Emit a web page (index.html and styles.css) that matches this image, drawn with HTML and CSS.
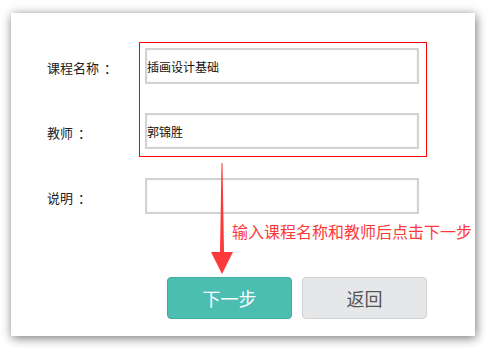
FILE: index.html
```html
<!DOCTYPE html>
<html lang="zh-CN">
<head>
    <meta charset="UTF-8">
    <meta name="viewport" content="width=device-width, initial-scale=1.0">
    <title>新建课程</title>
    <link rel="stylesheet" href="styles.css">
</head>
<body>
    <div class="page">
        <div class="card">
            <form class="course-form">
                <div class="form-row">
                    <label class="form-label">课程名称<span class="colon">：</span></label>
                    <input class="form-input" type="text" value="插画设计基础">
                </div>
                <div class="form-row">
                    <label class="form-label">教师<span class="colon">：</span></label>
                    <input class="form-input" type="text" value="郭锦胜">
                </div>
                <div class="form-row">
                    <label class="form-label">说明<span class="colon">：</span></label>
                    <input class="form-input" type="text" value="">
                </div>
                <div class="form-actions">
                    <button type="button" class="btn btn-next">下一步</button>
                    <button type="button" class="btn btn-back">返回</button>
                </div>
            </form>

            <div class="highlight-box"></div>
            <svg class="hint-arrow" width="22" height="112" viewBox="0 0 22 112">
                <polygon points="10.5,0 11.5,0 13,89 22,89 11,111 0,89 9,89" fill="#fd3a3a"/>
            </svg>
            <div class="hint-text">输入课程名称和教师后点击下一步</div>
        </div>
    </div>
</body>
</html>
```

FILE: styles.css
```css
* {
    margin: 0;
    padding: 0;
    box-sizing: border-box;
}

body {
    font-family: "Noto Sans CJK SC", "Noto Sans", sans-serif;
    background: #ffffff;
    width: 487px;
    height: 348px;
    overflow: hidden;
}

.page {
    padding: 13px 12px 12px 11px;
}

.card {
    position: relative;
    width: 464px;
    height: 323px;
    background: #ffffff;
    box-shadow: 1px 2px 10px rgba(0, 0, 0, 0.55);
}

.course-form {
    display: flex;
    flex-direction: column;
    gap: 29px;
    padding: 35px 0 0 36px;
}

.form-row {
    display: flex;
    align-items: center;
}

.form-label {
    width: 98px;
    font-size: 13px;
    color: #222;
    padding-top: 3px;
}

.form-label .colon {
    padding-left: 5px;
}

.form-input {
    width: 274px;
    height: 36px;
    border: 2px solid #d2d2d2;
    box-shadow: inset 0 0 2px rgba(0, 0, 0, 0.08);
    background: #fff;
    font-family: inherit;
    font-size: 12px;
    color: #111;
    padding: 0;
    outline: none;
}

.form-actions {
    display: flex;
    gap: 10px;
    margin: 34px 0 0 120px;
}

.btn {
    width: 125px;
    height: 42px;
    border-radius: 4px;
    font-family: inherit;
    font-size: 18px;
    cursor: pointer;
}

.btn-next {
    background: #4bbdb1;
    border: 1px solid #40ab9f;
    color: #fff;
}

.btn-back {
    background: #e6e7e9;
    border: 1px solid #cfd0d2;
    color: #555;
}

/* annotation overlay */
.highlight-box {
    position: absolute;
    left: 128px;
    top: 29px;
    width: 288px;
    height: 115px;
    border: 1px solid #ff0000;
}

.hint-arrow {
    position: absolute;
    left: 200px;
    top: 150px;
}

.hint-text {
    position: absolute;
    left: 221px;
    top: 207px;
    font-size: 16px;
    line-height: 22px;
    color: #fd3a3a;
    white-space: nowrap;
}
```
